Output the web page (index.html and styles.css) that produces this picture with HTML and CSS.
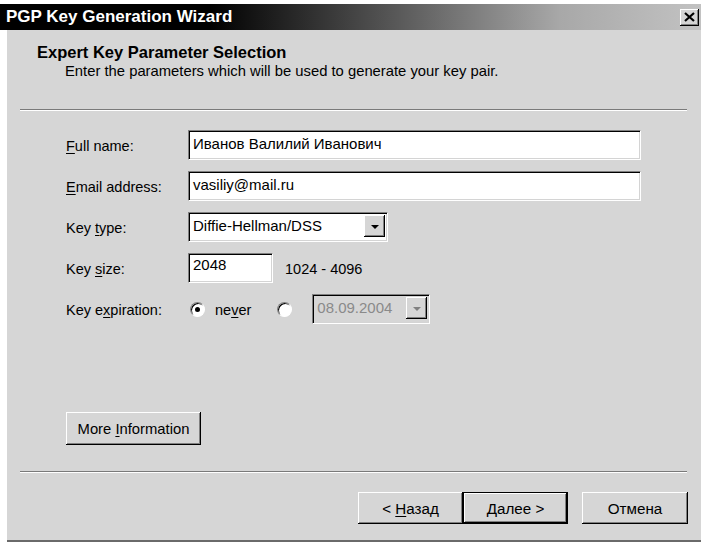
FILE: index.html
```html
<!DOCTYPE html>
<html>
<head>
<meta charset="utf-8">
<link rel="stylesheet" href="styles.css">
</head>
<body>
<div class="window">
  <div class="titlebar">
    <span class="title">PGP Key Generation Wizard</span>
    <span class="close">
      <svg width="11" height="10" viewBox="0 0 11 10"><path d="M1 1 L10 9 M10 1 L1 9" stroke="#000" stroke-width="2.2"/></svg>
    </span>
  </div>
  <div class="client">
    <div class="header">
      <div class="h-title">Expert Key Parameter Selection</div>
      <div class="h-sub">Enter the parameters which will be used to generate your key pair.</div>
    </div>
    <div class="sep"></div>
    <div class="form">
      <div class="label"><u>F</u>ull name:</div>
      <div class="field wide"><span>Иванов Валилий Иванович</span></div>

      <div class="label"><u>E</u>mail address:</div>
      <div class="field wide"><span>vasiliy@mail.ru</span></div>

      <div class="label">Key <u>t</u>ype:</div>
      <div class="ctl">
        <div class="field combo"><span>Diffie-Hellman/DSS</span><span class="arrow"><i class="tri"></i></span></div>
      </div>

      <div class="label">Key <u>s</u>ize:</div>
      <div class="ctl">
        <div class="field size"><span>2048</span></div>
        <span class="range">1024 - 4096</span>
      </div>

      <div class="label">Key e<u>x</u>piration:</div>
      <div class="ctl exp">
        <span class="radio checked"><i></i></span>
        <span class="never">ne<u>v</u>er</span>
        <span class="radio second"></span>
        <div class="field combo date"><span>08.09.2004</span><span class="arrow"><i class="tri"></i></span></div>
      </div>
    </div>
    <div class="more-row">
      <span class="btn more"><span>More <u>I</u>nformation</span></span>
    </div>
    <div class="sep bottom-sep"></div>
    <div class="buttons">
      <span class="btn nav"><span>&lt; <u>Н</u>азад</span></span>
      <span class="btn nav default"><span>Далее &gt;</span></span>
      <span class="btn nav cancel"><span>Отмена</span></span>
    </div>
  </div>
</div>
</body>
</html>
```

FILE: styles.css
```css
html, body {
  margin: 0;
  padding: 0;
  background: #ffffff;
}
body {
  font-family: "Liberation Sans", Arial, sans-serif;
  font-size: 14.5px;
  color: #000;
}
.window {
  width: 701px;
  padding-top: 4px;
}
.titlebar {
  height: 26px;
  background: linear-gradient(to right, #000 0px, #000 210px, #5a5a5a 400px, #a8a8a8 560px, #c2c2c2 700px);
  display: flex;
  align-items: center;
  justify-content: space-between;
  padding-left: 6px;
  padding-right: 2px;
}
.title {
  color: #fff;
  font-weight: bold;
  font-size: 17px;
}
.close {
  width: 19px;
  height: 17px;
  background: #d4d4d4;
  box-shadow: inset -1px -1px 0 #000, inset 1px 1px 0 #fff, inset -2px -2px 0 #808080;
  display: flex;
  align-items: center;
  justify-content: center;
}
.client {
  margin-left: 7px;
  background: #d6d6d6;
  height: 510px;
  border-bottom: 2px solid #6a6a6a;
  display: flex;
  flex-direction: column;
}
.header {
  padding: 13px 0 0 30px;
  height: 66px;
  box-sizing: border-box;
}
.h-title {
  font-weight: bold;
  font-size: 16.5px;
  line-height: 19px;
}
.h-sub {
  margin-top: 0;
  padding-left: 28px;
  font-size: 14.8px;
  line-height: 18px;
}
.sep {
  margin: 0 14px 0 13px;
  border-top: 1px solid #7a7a7a;
  border-bottom: 1px solid #fff;
  height: 0;
}
.header + .sep {
  margin-top: 13px;
}
.form {
  margin-top: 19px;
  padding-left: 59px;
  display: grid;
  grid-template-columns: 122px 453px;
  grid-auto-rows: 30px;
  row-gap: 11px;
  align-items: center;
}
.label {
  line-height: 30px;
  padding-top: 2px;
}
u {
  text-decoration: underline;
  text-underline-offset: 2px;
}
.ctl {
  display: flex;
  align-items: center;
  height: 30px;
}
.field {
  height: 30px;
  box-sizing: border-box;
  background: #fff;
  border-top: 1px solid #808080;
  border-left: 1px solid #808080;
  border-right: 1px solid #fff;
  border-bottom: 1px solid #fff;
  box-shadow: inset 1px 1px 0 #000, inset -1px -1px 0 #d4d4d4;
  padding: 3px 0 0 4px;
  font-size: 15px;
  line-height: 20px;
  white-space: nowrap;
}
.wide {
  width: 453px;
}
.combo {
  width: 200px;
  display: flex;
  align-items: flex-start;
  justify-content: space-between;
  padding-right: 2px;
}
.arrow {
  width: 21px;
  height: 22px;
  margin-top: -1px;
  background: #d6d6d6;
  box-shadow: inset -1px -1px 0 #000, inset 1px 1px 0 #fff, inset -2px -2px 0 #808080;
  display: flex;
  align-items: center;
  justify-content: center;
  box-sizing: border-box;
}
.tri {
  width: 0;
  height: 0;
  border-left: 4px solid transparent;
  border-right: 4px solid transparent;
  border-top: 4px solid #000;
  margin-top: 1px;
}
.size {
  width: 85px;
  padding-top: 1px;
}
.range {
  margin-left: 12px;
  padding-top: 2px;
}
.radio {
  width: 15px;
  height: 15px;
  border-radius: 50%;
  box-sizing: border-box;
  background: #fff;
  border: 1px solid;
  border-color: #808080 #fff #fff #808080;
  box-shadow: inset 1px 1px 0 #000;
  display: flex;
  align-items: center;
  justify-content: center;
  margin-left: 2px;
  margin-top: 1px;
}
.radio i {
  width: 5px;
  height: 5px;
  border-radius: 50%;
  background: #000;
}
.never {
  margin-left: 10px;
  padding-top: 2px;
}
.radio.second {
  margin-left: 26px;
}
.date {
  width: 118px;
  margin-left: 20px;
  background: #d6d6d6;
  color: #8a8a8a;
}
.date .tri {
  border-top-color: #808080;
}
.more-row {
  margin-top: 88px;
  padding-left: 59px;
}
.btn {
  display: inline-flex;
  align-items: center;
  justify-content: center;
  box-sizing: border-box;
  background: #d6d6d6;
  box-shadow: inset -1px -1px 0 #000, inset 1px 1px 0 #fff, inset -2px -2px 0 #808080;
  white-space: nowrap;
}
.more {
  width: 135px;
  height: 33px;
  padding-top: 1px;
  font-size: 14.8px;
}
.bottom-sep {
  margin-top: 26px;
}
.buttons {
  margin-top: 19px;
  display: flex;
  padding-left: 351px;
}
.nav {
  width: 105px;
  height: 32px;
  padding-top: 1px;
  font-size: 15.2px;
}
.default {
  box-shadow: inset 0 0 0 1px #000, inset -2px -2px 0 #000, inset 2px 2px 0 #fff, inset -3px -3px 0 #808080;
}
.cancel {
  margin-left: 14px;
  width: 106px;
}
```
